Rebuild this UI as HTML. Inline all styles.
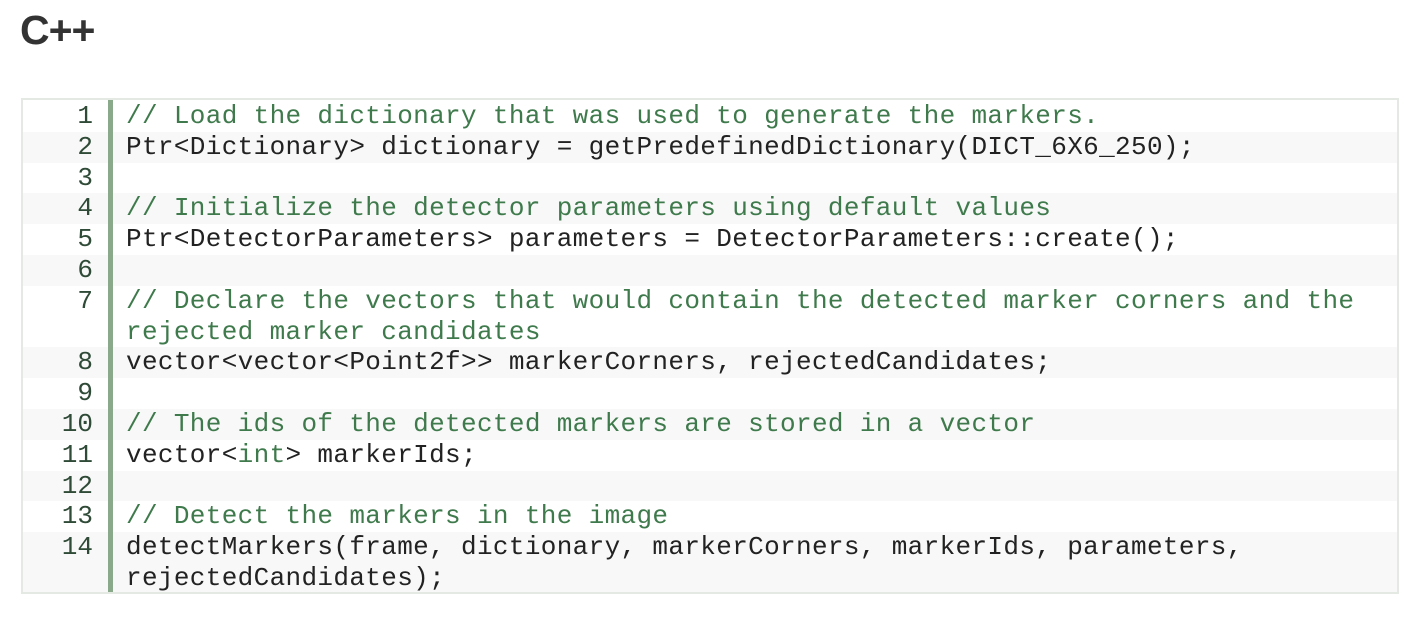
<!DOCTYPE html>
<html><head><meta charset="utf-8"><style>
body{margin:0;background:#fff;width:1418px;height:627px;overflow:hidden;position:relative}
h1{position:absolute;left:20px;top:7px;margin:0;font:bold 41px "Liberation Sans",sans-serif;color:#333;letter-spacing:-1px}
.box{position:absolute;left:21px;top:98px;width:1378px;height:496px;border:2px solid #e4e9e4;box-sizing:border-box;padding-top:1px;background:#fff;overflow:hidden}
.bar{position:absolute;left:85px;top:0;width:5px;height:100%;background:#8aa88a}
.row{display:flex;font:26px/30.8px "Liberation Mono",monospace;color:#222;white-space:pre;letter-spacing:0.35px}
.row:nth-child(even){background:#f7f8f7}
.n{width:70px;text-align:right;color:#2f4a37;flex:none;letter-spacing:0}
.c{padding-left:33px;white-space:pre-wrap;width:1240px}
.g{color:#3f7a4c}
.k{color:#3f7a4c}
</style></head><body>
<h1>C++</h1>
<div class="box">
<div class="rows">
<div class="row"><span class="n">1</span><span class="c g">// Load the dictionary that was used to generate the markers.</span></div>
<div class="row"><span class="n">2</span><span class="c">Ptr&lt;Dictionary&gt; dictionary = getPredefinedDictionary(DICT_6X6_250);</span></div>
<div class="row"><span class="n">3</span><span class="c"> </span></div>
<div class="row"><span class="n">4</span><span class="c g">// Initialize the detector parameters using default values</span></div>
<div class="row"><span class="n">5</span><span class="c">Ptr&lt;DetectorParameters&gt; parameters = DetectorParameters::create();</span></div>
<div class="row"><span class="n">6</span><span class="c"> </span></div>
<div class="row"><span class="n">7</span><span class="c g">// Declare the vectors that would contain the detected marker corners and the
rejected marker candidates</span></div>
<div class="row"><span class="n">8</span><span class="c">vector&lt;vector&lt;Point2f&gt;&gt; markerCorners, rejectedCandidates;</span></div>
<div class="row"><span class="n">9</span><span class="c"> </span></div>
<div class="row"><span class="n">10</span><span class="c g">// The ids of the detected markers are stored in a vector</span></div>
<div class="row"><span class="n">11</span><span class="c">vector&lt;<span class="k">int</span>&gt; markerIds;</span></div>
<div class="row"><span class="n">12</span><span class="c"> </span></div>
<div class="row"><span class="n">13</span><span class="c g">// Detect the markers in the image</span></div>
<div class="row"><span class="n">14</span><span class="c">detectMarkers(frame, dictionary, markerCorners, markerIds, parameters,
rejectedCandidates);</span></div>
</div>
<div class="bar"></div>
</div>
</body></html>
